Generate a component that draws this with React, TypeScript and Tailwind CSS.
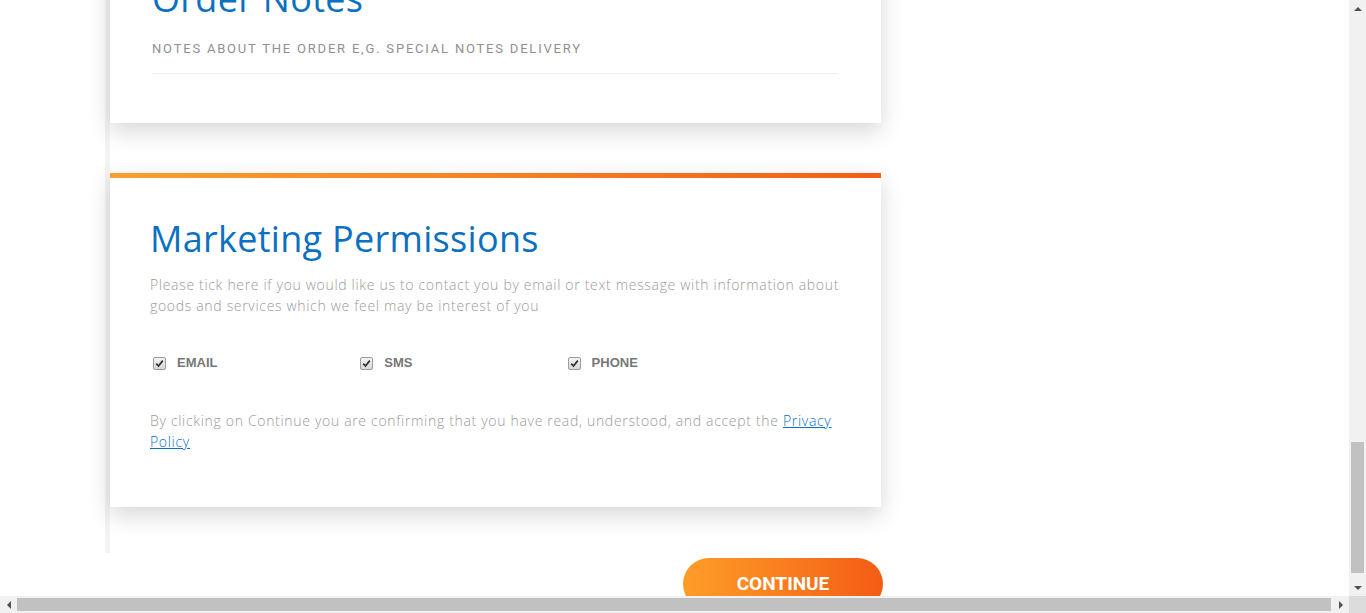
import React from "react";

const heading = "font-['Open_Sans',sans-serif] text-[36px] leading-[44px] tracking-[0.3px] text-[#0b70c0]";
const body = "font-['Open_Sans',sans-serif] font-light text-[14px] leading-[21px] tracking-[0.68px] text-[#9a9a9a]";

const Check = () => (
  <span className="flex h-[13px] w-[13px] items-center justify-center rounded-[2px] border border-[#9a9a9a] bg-gradient-to-b from-[#f4f4f4] to-[#d8d8d8]">
    <svg width="9" height="9" viewBox="0 0 9 9">
      <path d="M1.2 4.6 L3.5 7 L7.8 1.6" stroke="#333" strokeWidth="1.8" fill="none" />
    </svg>
  </span>
);

const Arrow = ({ dir }: { dir: "up" | "down" | "left" | "right" }) => {
  const pts = {
    up: "4,1 8,5 0,5",
    down: "0,1 8,1 4,5",
    left: "5,0 5,8 1,4",
    right: "1,0 1,8 5,4",
  }[dir];
  const w = dir === "up" || dir === "down" ? 8 : 6;
  const h = dir === "up" || dir === "down" ? 6 : 8;
  return (
    <svg width={w} height={h} viewBox={`0 0 ${w} ${h}`}>
      <polygon points={pts} fill="#505050" />
    </svg>
  );
};

const permissions = ["EMAIL", "SMS", "PHONE"];

export default function App() {
  return (
    <div className="flex h-[613px] w-[1366px] flex-col overflow-hidden bg-white">
      <div className="flex min-h-0 flex-1">
        <div className="min-w-0 flex-1 overflow-hidden">
          <div className="-mt-[63px] ml-[105px] w-[776px]">
            <div className="border-l-[5px] border-[#f3f3f3] pb-[46px]">
              {/* order notes */}
              <div className="bg-white pt-[40px] pb-[49px] pl-[42px] pr-[43px] shadow-[0_8px_22px_rgba(0,0,0,0.16)]">
                <h2 className={heading}>Order Notes</h2>
                <div className="mt-[18px] font-['Roboto',sans-serif] text-[13px] leading-[20px] tracking-[1.8px] text-[#8f8f8f]">
                  NOTES ABOUT THE ORDER E,G. SPECIAL NOTES DELIVERY
                </div>
                <div className="mt-[14px] h-px bg-[#ececec]" />
              </div>

              {/* marketing permissions */}
              <div className="mt-[50px] shadow-[0_8px_22px_rgba(0,0,0,0.16)]">
                <div className="h-[5px] bg-gradient-to-r from-[#f7a02c] to-[#f25f16]" />
                <div className="bg-white px-[40px] pt-[39px] pb-[55px]">
                  <h2 className={heading}>Marketing Permissions</h2>
                  <p className={`mt-[13px] ${body}`}>
                    Please tick here if you would like us to contact you by email or text message with information about goods and
                    services which we feel may be interest of you
                  </p>
                  <div className="mt-[37px] flex h-[20px] items-center">
                    {permissions.map((p) => (
                      <label key={p} className="flex w-[30%] items-center pl-[3px]">
                        <Check />
                        <span className="ml-[11px] font-['Liberation_Sans',sans-serif] text-[13px] font-bold text-[#777]">{p}</span>
                      </label>
                    ))}
                  </div>
                  <p className={`mt-[37px] ${body}`}>
                    By clicking on Continue you are confirming that you have read, understood, and accept the{" "}
                    <a className="text-[#0b70c0] underline">Privacy Policy</a>
                  </p>
                </div>
              </div>
            </div>

            <div className="flex justify-end -mr-[2px] pt-[5px]">
              <button className="h-[52px] w-[200px] rounded-full bg-gradient-to-r from-[#fd9d28] to-[#f35b14] font-['Roboto',sans-serif] text-[19px] font-bold text-white">
                CONTINUE
              </button>
            </div>
          </div>
        </div>

        {/* vertical scrollbar */}
        <div className="flex w-[17px] flex-col bg-[#f1f1f1]">
          <div className="flex h-[17px] items-center justify-center">
            <Arrow dir="up" />
          </div>
          <div className="flex-1 px-[2px] pt-[425px] pb-[6px]">
            <div className="h-full bg-[#c1c1c1]" />
          </div>
          <div className="flex h-[17px] items-center justify-center">
            <Arrow dir="down" />
          </div>
        </div>
      </div>

      {/* horizontal scrollbar */}
      <div className="flex h-[17px] bg-[#f1f1f1]">
        <div className="flex w-[17px] items-center justify-center">
          <Arrow dir="left" />
        </div>
        <div className="flex flex-1 items-center pr-[1px]">
          <div className="h-[13px] w-full bg-[#c1c1c1]" />
        </div>
        <div className="flex w-[17px] items-center justify-center">
          <Arrow dir="right" />
        </div>
        <div className="w-[17px] bg-[#dcdcdc]" />
      </div>
    </div>
  );
}
